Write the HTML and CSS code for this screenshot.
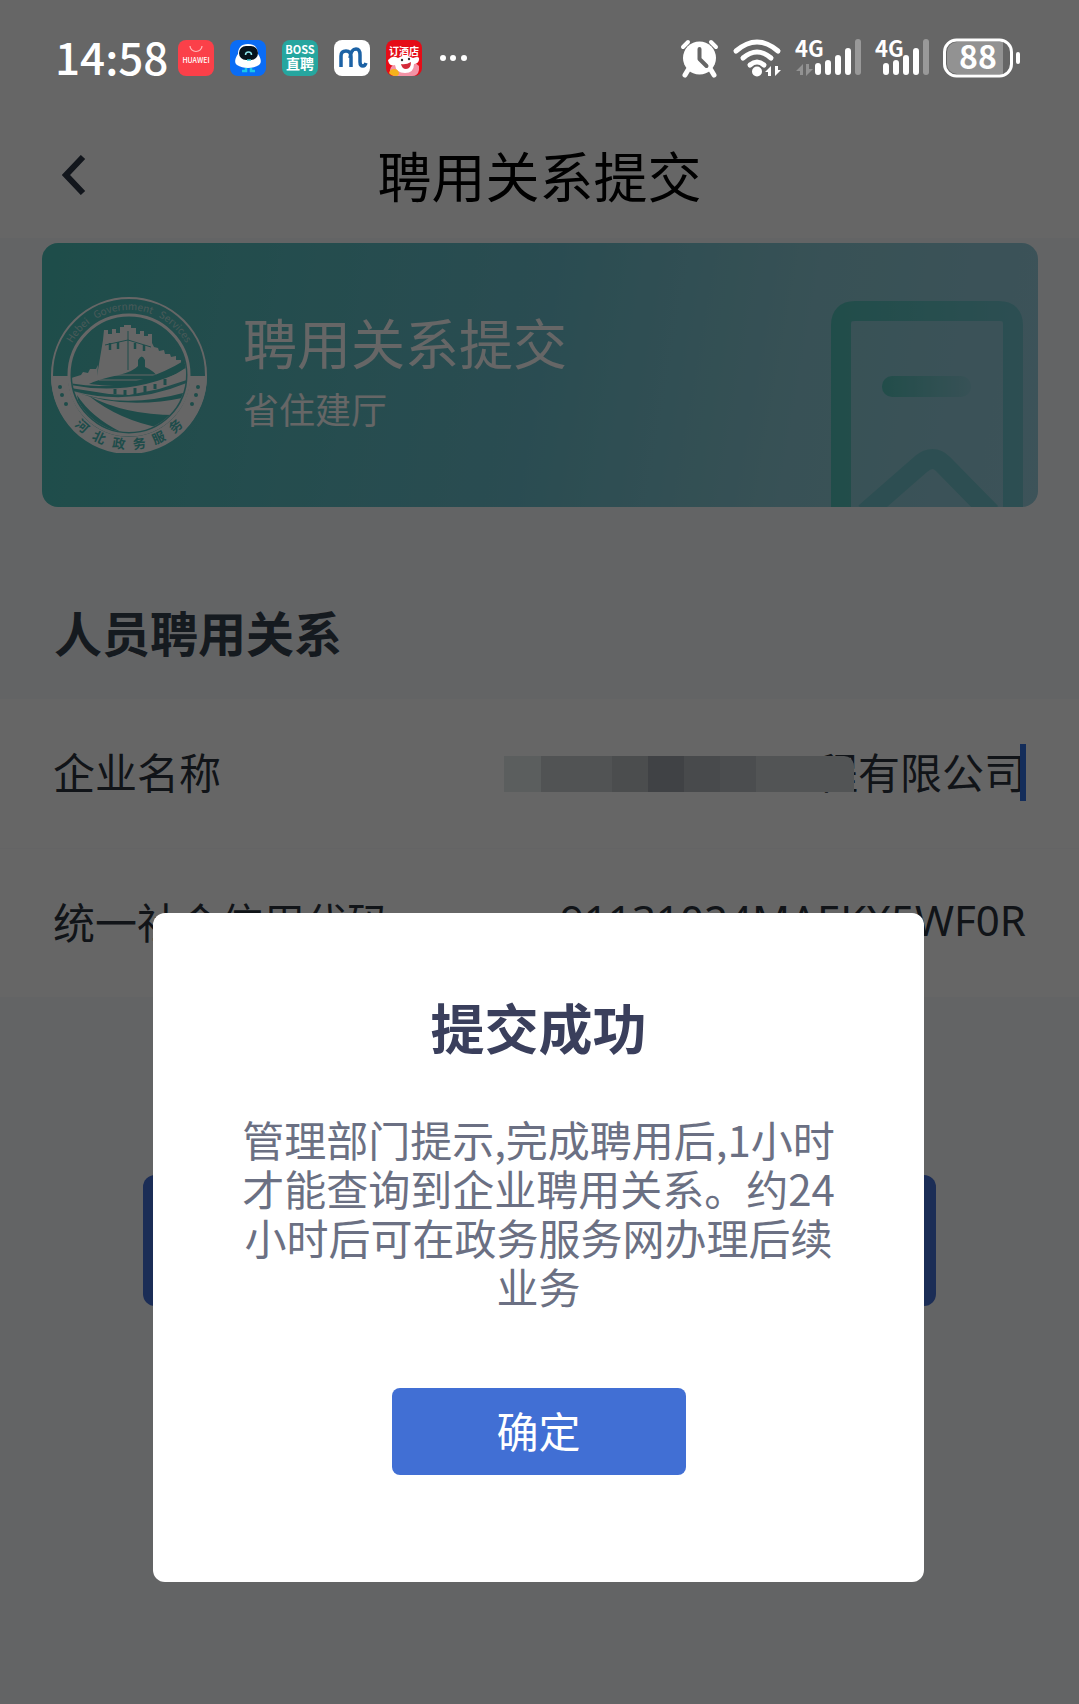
FILE: index.html
```html
<!DOCTYPE html>
<html lang="zh-CN">

<head>
    <meta charset="UTF-8">
    <meta name="viewport" content="width=device-width, initial-scale=1.0">
    <title>聘用关系提交</title>
    <link rel="stylesheet" href="styles.css">
</head>

<body>
    <div class="status-bar">
        <span class="time">14:58</span>
        <div class="apps">
            <svg class="app" viewBox="0 0 36 36">
                <rect width="36" height="36" rx="8" fill="#fb4049" />
                <path d="M12 6a6 5.500 0 0 0 12 0" fill="none" stroke="#ffb9bb" stroke-width="1.200" />
                <text x="18" y="23" font-size="7" font-weight="500" text-anchor="middle" fill="#fff">HUAWEI</text>
            </svg>
            <svg class="app" viewBox="0 0 36 36">
                <rect width="36" height="36" rx="8" fill="#0a6cf5" />
                <path d="M18 4C11 4 8 8 8 14c-3 4-4 9-1 11 6 4 16 4 22 0 3-2 2-7-1-11 0-6-3-10-10-10z" fill="#fff" />
                <rect x="9" y="6" width="19" height="14" rx="7" fill="#06131c" />
                <path d="M15.500 15a3 3 0 0 1 6 0" fill="none" stroke="#8de4ea" stroke-width="1.500" />
                <path d="M17 20h4" stroke="#35c8d8" stroke-width="1.500" />
                <path d="M12 31h4v-3M25 31h-4v-3" fill="none" stroke="#1cc8e8" stroke-width="2.500" />
            </svg>
            <svg class="app" viewBox="0 0 36 36">
                <rect width="36" height="36" rx="8" fill="#26a69f" />
                <text x="18" y="14" font-size="11" font-weight="700" text-anchor="middle" fill="#fff">BOSS</text>
                <text x="18" y="29" font-size="14" font-weight="700" text-anchor="middle" fill="#fff">直聘</text>
            </svg>
            <svg class="app" viewBox="0 0 36 36">
                <rect width="36" height="36" rx="8" fill="#fff" />
                <path d="M7 27V16q0-5 5-5t5 6v10M16 18q1-9 6-9 4 0 4 6v7q0 4 3 4 2 0 3-3" fill="none" stroke="#1c62a5" stroke-width="3.500" />
                <circle cx="21" cy="12" r="1" fill="#fff" />
            </svg>
            <svg class="app" viewBox="0 0 36 36">
                <rect width="36" height="36" rx="8" fill="#e50c17" />
                <path d="M4 30q2-8 14-8t15 4v4q-1 6-7 6H10q-6 0-6-6z" fill="#f493a6" />
                <path d="M2 20q5-6 10-2 7-5 15 0 7-3 6 2-1 4-5 4 0 9-9 9t-10-8q-6 2-7-5z" fill="#fff" />
                <path d="M15 24q5 1 10-2 0 7-5 7-4 0-5-5z" fill="#d42b3a" />
                <circle cx="16" cy="20" r="1.200" fill="#333" />
                <circle cx="23" cy="19" r="1.200" fill="#333" />
                <path d="M3 33q1-4 5-4t5 4q0 3-3 3-5 0-7-3z" fill="#f6b21b" />
                <text x="18" y="15" font-size="10" font-weight="700" text-anchor="middle" fill="#fff">订酒店</text>
            </svg>
        </div>
        <svg class="more" viewBox="0 0 28 6" fill="#fff">
            <circle cx="3" cy="3" r="3" />
            <circle cx="13" cy="3" r="3" />
            <circle cx="24" cy="3" r="3" />
        </svg>

        <div class="system">
            <!-- alarm -->
            <svg width="39" height="40" viewBox="0 0 39 40">
                <path d="M8 32l-3 5M31 32l3 5" stroke="#fff" stroke-width="5" stroke-linecap="round" />
                <path d="M3 9l5-5M36 9l-5-5" stroke="#fff" stroke-width="4" stroke-linecap="round" />
                <circle cx="19.500" cy="20" r="16.500" fill="#fff" />
                <path d="M19.500 11v10l7 7" fill="none" stroke="#666" stroke-width="4" stroke-linecap="round" stroke-linejoin="round" />
            </svg>
            <!-- wifi -->
            <svg width="48" height="40" viewBox="0 0 48 40">
                <g fill="none" stroke="#fff" stroke-width="5" stroke-linecap="round">
                    <path d="M3 13q21-18 42 0" />
                    <path d="M10 20q14-12 28 0" />
                    <path d="M17 27q7-6 14 0" />
                </g>
                <circle cx="24" cy="33.500" r="5" fill="#fff" />
                <path d="M32 34l6-6v10h-3v-4zM48 32l-6 6V28h3v4z" fill="#fff" />
            </svg>
            <!-- sim 1 -->
            <svg width="66" height="40" viewBox="0 0 66 40">
                <text x="0" y="19" font-size="22" font-weight="700" fill="#fff">4G</text>
                <path d="M1 33l7-7v11H5v-4zM18 31l-7 7V26h3v5z" fill="#929292" />
                <g stroke="#fff" stroke-width="6" stroke-linecap="round">
                    <path d="M23 28v6M33 25v9M43 20v14M53 13v21" />
                    <path d="M63 4v30" stroke="#999" />
                </g>
            </svg>
            <!-- sim 2 -->
            <svg width="54" height="40" viewBox="0 0 54 40">
                <text x="0" y="19" font-size="22" font-weight="700" fill="#fff">4G</text>
                <g stroke="#fff" stroke-width="6" stroke-linecap="round">
                    <path d="M11 28v6M21 25v9M31 20v14M41 13v21" />
                    <path d="M51 4v30" stroke="#999" />
                </g>
            </svg>
            <!-- battery -->
            <svg width="78" height="40" viewBox="0 0 78 40">
                <path d="M14 4h46v32H14a10 10 0 0 1-10-10V14A10 10 0 0 1 14 4z" fill="#929292" />
                <rect x="1.500" y="2" width="67" height="36" rx="12" fill="none" stroke="#fff" stroke-width="3" />
                <rect x="73" y="14" width="4" height="12" rx="2" fill="#fff" />
                <text x="35" y="31" font-size="32" font-weight="700" text-anchor="middle" fill="#fff">88</text>
            </svg>
        </div>
    </div>

    <header class="nav">
        <button class="back" type="button" aria-label="返回">
            <svg width="24" height="40" viewBox="0 0 24 40">
                <path d="M21 2L4 20l17 18" fill="none" stroke="#2d3746" stroke-width="6" />
            </svg>
        </button>
        <h1>聘用关系提交</h1>
    </header>

    <main>
        <section class="banner">
            <svg class="seal" viewBox="0 0 156 156">
                <defs>
                    <clipPath id="disc"><circle cx="78" cy="78" r="57" /></clipPath>
                    <path id="arc-top" d="M13 78a65 65 0 0 1 130 0" />
                    <path id="arc-bottom" d="M4 78a74 74 0 0 0 148 0" />
                </defs>
                <circle cx="78" cy="78" r="77" fill="none" stroke="#fff" stroke-width="2" />
                <path d="M0 79a78 78 0 0 0 156 0h-17a61 61 0 0 1-122 0z" fill="#fff" />
                <circle cx="78" cy="78" r="60" fill="none" stroke="#fff" stroke-width="3" />
                <g clip-path="url(#disc)">
                    <path d="M46 79l6-36 1-10h4v4h4v-5h4v4h4v-6h4v-2h7v3h5v6h4v-3h4v5h4v-2h4v9l2 4 4 1 1 3 5-1 1 4 5 0 1 3 5-1v4l5 0v4l6-2v12q-30 14-62 18l-54-4v-10l10-3 2-3 5 1 2-4 6 0 2-4z" fill="#fff" />
                    <path d="M77 34v39" stroke="#4dbdb9" stroke-width="1" />
                    <path d="M54 48l23-5 23 7" fill="none" stroke="#4dbdb9" stroke-width="1" />
                    <path d="M59 46v7M67 45v7M84 46v6M93 48v6" stroke="#4dbdb9" stroke-width="2.500" />
                    <path d="M87 69v-6q4-7 7 0v7q10 4 14 12-30 10-70 5 10-5 30-9 15-4 19-9z" fill="#4dbdb9" />
                    <path d="M58 78h48M48 83h56" stroke="#fff" stroke-width="1" />
                    <path d="M18 86q60 12 118-24v8q-50 34-118 24z" fill="#4dbdb9" />
                    <path d="M20 88q60 12 116-16v11l-28 9-30 6-20-1-38-6z" fill="#fff" />
                    <path d="M64 92v5M74 93v5M84 91v6M94 89v6M104 87v5M114 82v6" stroke="#4dbdb9" stroke-width="3" />
                    <path d="M18 93q60 18 120-8v57H18z" fill="#fff" />
                    <path d="M22 94q50 19 114 1v5q-64 14-114-6z" fill="#4dbdb9" />
                    <path d="M38 99q30 24 72 32 8-4 14-13-50 0-86-19z" fill="#4dbdb9" />
                    <path d="M26 98q14 22 44 37l-38-6z" fill="#4dbdb9" />
                </g>
                <g fill="#4dbdb9">
                    <circle cx="9" cy="90" r="2" />
                    <circle cx="11" cy="98" r="2" />
                    <circle cx="15" cy="107" r="2" />
                    <circle cx="147" cy="90" r="2" />
                    <circle cx="145" cy="98" r="2" />
                    <circle cx="141" cy="107" r="2" />
                </g>
                <text font-size="10" fill="#b6dfdd"><textPath href="#arc-top" startOffset="50%" text-anchor="middle">Hebei &#160; Government &#160; Services</textPath></text>
                <text font-size="13" font-weight="700" fill="#4dbdb9"><textPath href="#arc-bottom" startOffset="50%" text-anchor="middle">河 &#160; 北 &#160; 政 &#160; 务 &#160; 服 &#160; 务</textPath></text>
            </svg>
            <div class="banner-text">
                <h2>聘用关系提交</h2>
                <p>省住建厅</p>
            </div>
            <svg class="bookmark" viewBox="0 0 192 206">
                <defs>
                    <linearGradient id="mark" gradientUnits="userSpaceOnUse" x1="0" y1="0" x2="192" y2="0">
                        <stop offset="0" stop-color="#52c0b8" />
                        <stop offset="1" stop-color="#70c4ce" />
                    </linearGradient>
                    <linearGradient id="dash" gradientUnits="userSpaceOnUse" x1="50" y1="0" x2="142" y2="0">
                        <stop offset="0" stop-color="#54c0b8" />
                        <stop offset="1" stop-color="#8ccbd8" />
                    </linearGradient>
                </defs>
                <path d="M10 212V24q0-14 14-14h144q14 0 14 14v188" fill="none" stroke="url(#mark)" stroke-width="20" />
                <path d="M34 212l56-49q12-10 22 0l48 49" fill="none" stroke="#72c4cc" stroke-width="20" />
                <rect x="51" y="75" width="89" height="21" rx="10" fill="url(#dash)" />
            </svg>
        </section>

        <h2 class="section-title">人员聘用关系</h2>

        <form id="relation" class="form">
            <div class="row">
                <label for="company">企业名称</label>
                <div class="value">
                    <input id="company" type="text" value="程有限公司">
                    <span class="mask"></span>
                    <span class="caret"></span>
                </div>
            </div>
            <div class="row">
                <label for="code">统一社会信用代码</label>
                <div class="value">
                    <input id="code" class="code" type="text" value="91131024MAEKX5WF0R">
                </div>
            </div>
        </form>

        <button class="submit" type="submit" form="relation" aria-label="提交"></button>
    </main>

    <div class="overlay">
        <div class="dialog" role="dialog" aria-labelledby="dialog-title">
            <h2 id="dialog-title">提交成功</h2>
            <p>管理部门提示,完成聘用后,1小时才能查询到企业聘用关系。约24小时后可在政务服务网办理后续业务</p>
            <button class="confirm" type="button">确定</button>
        </div>
    </div>
</body>

</html>
```
FILE: styles.css
```css
* {
    box-sizing: border-box;
}

body {
    margin: 0;
    min-height: 100vh;
    background: #f8fafc;
    color: #2b323d;
    font-family: "Noto Sans CJK SC", "Noto Sans", sans-serif;
    font-size: 42px;
}

h1,
h2,
p {
    margin: 0;
}

button,
input {
    font: inherit;
    color: inherit;
    border: none;
    background: none;
    padding: 0;
}

svg {
    display: block;
    flex: none;
}

/* status bar stays above the overlay */
.status-bar {
    position: relative;
    z-index: 20;
    display: flex;
    align-items: center;
    height: 116px;
    padding: 0 58px 0 55px;
    background: #666;
    color: #fff;
}

.time {
    padding-bottom: 4px;
    font-size: 44px;
    font-weight: 500;
    line-height: 60px;
}

.apps {
    display: flex;
    gap: 16px;
    margin-left: 10px;
}

.app {
    width: 36px;
    height: 36px;
}

.more {
    width: 28px;
    margin-left: 18px;
}

.system {
    display: flex;
    align-items: center;
    gap: 14px;
    margin-left: auto;
}

.system svg {
    overflow: visible;
}

.nav {
    display: grid;
    grid-template-columns: 120px 1fr 120px;
    align-items: center;
    height: 122px;
    padding-bottom: 5px;
    background: #fff;
}

.nav h1 {
    color: #000;
    font-size: 54px;
    font-weight: 400;
    line-height: 72px;
    text-align: center;
}

.back {
    padding-left: 62px;
}

.banner {
    display: flex;
    align-items: center;
    height: 264px;
    margin: 5px 41px 0 42px;
    padding: 0 15px 0 9px;
    border-radius: 16px;
    background: linear-gradient(100deg, #4cc0b9 0%, #6abfcc 50%, #8ccbd6 75%, #98cfdf 100%);
    color: #fff;
}

.seal {
    width: 156px;
    height: 156px;
}

.banner-text {
    margin: 0 auto 0 36px;
    padding-bottom: 6px;
}

.banner-text h2 {
    font-size: 54px;
    font-weight: 400;
    line-height: 72px;
}

.banner-text p {
    font-size: 36px;
    line-height: 60px;
}

.bookmark {
    align-self: flex-end;
    width: 192px;
    height: 206px;
}

.section-title {
    padding: 91px 54px 35px;
    color: #35414f;
    font-size: 48px;
    font-weight: 700;
    line-height: 66px;
}

.form {
    background: #fff;
}

.row {
    display: flex;
    align-items: center;
    height: 149px;
    padding: 0 53px 6px;
}

.row + .row {
    border-top: 1px solid #fafafc;
}

.value {
    position: relative;
    flex: 1;
}

.value input {
    display: block;
    width: 100%;
    line-height: 60px;
    text-align: right;
    outline: none;
}

.value .code {
    font-family: "Noto Sans", "Noto Sans CJK SC", sans-serif;
}

.mask {
    position: absolute;
    top: 15px;
    right: 172px;
    width: 350px;
    height: 36px;
    border-radius: 0 10px 0 0;
    background: linear-gradient(90deg, #e4eceb 0 37px, #cbd0d2 37px 108px, #bcc1c4 108px 144px, #a0a6ac 144px 180px, #b4b9be 180px 216px, #bcc1c5 216px 252px, #cdd2d4 252px);
}

.caret {
    position: absolute;
    top: 3px;
    right: 0;
    width: 6px;
    height: 57px;
    background: #3470e0;
}

.submit {
    display: block;
    width: calc(100% - 286px);
    height: 131px;
    margin: 178px auto 0;
    border-radius: 12px;
    background: #4470d6;
}

.overlay {
    position: fixed;
    inset: 0;
    z-index: 10;
    display: flex;
    align-items: flex-end;
    justify-content: center;
    padding: 0 155px 122px 153px;
    background: rgba(0, 0, 0, 0.6);
}

.dialog {
    flex: 1;
    padding: 78px 86px 107px;
    border-radius: 12px;
    background: #fff;
    text-align: center;
}

.dialog h2 {
    color: #3a3f5c;
    font-size: 54px;
    font-weight: 700;
    line-height: 72px;
}

.dialog p {
    margin-top: 51px;
    color: #6b7083;
    line-height: 49px;
}

.confirm {
    width: 294px;
    height: 87px;
    margin-top: 78px;
    padding-bottom: 4px;
    border-radius: 8px;
    background: #416fd4;
    color: #fff;
    line-height: 60px;
}
```
